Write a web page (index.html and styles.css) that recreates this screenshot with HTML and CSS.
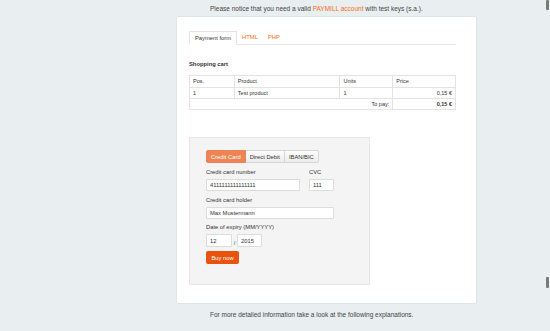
FILE: index.html
```html
<!DOCTYPE html>
<html lang="en">
<head>
    <meta charset="UTF-8">
    <title>PAYMILL - Payment form</title>
    <link rel="stylesheet" href="styles.css">
</head>
<body>
    <div class="page">
        <p class="notice">Please notice that you need a valid <a href="#">PAYMILL account</a> with test keys (s.a.).</p>

        <!-- Main card -->
        <div class="card">
            <ul class="tabs">
                <li class="active"><a href="#">Payment form</a></li>
                <li><a href="#">HTML</a></li>
                <li><a href="#">PHP</a></li>
            </ul>

            <h3>Shopping cart</h3>
            <table class="cart">
                <tr>
                    <th class="c-pos">Pos.</th>
                    <th class="c-product">Product</th>
                    <th class="c-units">Units</th>
                    <th class="c-price">Price</th>
                </tr>
                <tr>
                    <td>1</td>
                    <td>Test product</td>
                    <td>1</td>
                    <td class="right">0,15 &euro;</td>
                </tr>
                <tr>
                    <td colspan="3" class="right">To pay:</td>
                    <td class="right"><strong>0,15 &euro;</strong></td>
                </tr>
            </table>

            <!-- Payment box -->
            <div class="payment">
                <div class="btn-group">
                    <button class="active">Credit Card</button>
                    <button>Direct Debit</button>
                    <button>IBAN/BIC</button>
                </div>

                <div class="row">
                    <div class="field number">
                        <label>Credit card number</label>
                        <input type="text" value="4111111111111111">
                    </div>
                    <div class="field cvc">
                        <label>CVC</label>
                        <input type="text" value="111">
                    </div>
                </div>

                <div class="field holder">
                    <label>Credit card holder</label>
                    <input type="text" value="Max Mustermann">
                </div>

                <div class="field">
                    <label>Date of expiry (MM/YYYY)</label>
                    <div class="expiry">
                        <input type="text" class="month" value="12">
                        <span>/</span>
                        <input type="text" class="year" value="2015">
                    </div>
                </div>

                <button class="buy">Buy now</button>
            </div>
        </div>

        <p class="footer-note">For more detailed information take a look at the following explanations.</p>
    </div>

    <div class="scroll-mark top"></div>
    <div class="scroll-mark bottom"></div>
</body>
</html>
```

FILE: styles.css
```css
/* Basic reset */
* {
    margin: 0;
    padding: 0;
    box-sizing: border-box;
}

body {
    font-family: "Liberation Sans", Arial, sans-serif;
    font-size: 5.8px;
    background-color: #e9eef1;
    color: #444;
    height: 331px;
    overflow: hidden;
}

a {
    color: #f26d21;
    text-decoration: none;
}

.page {
    margin-left: 176px;
    width: 301px;
}

.notice {
    height: 16px;
    line-height: 17px;
    padding-left: 34px;
    font-size: 6.5px;
    color: #444;
    white-space: nowrap;
}

/* Card */
.card {
    height: 288px;
    background-color: #fff;
    border: 1px solid #dfe4e7;
    border-radius: 2px;
    padding: 14px 20px 0 12px;
}

.tabs {
    list-style: none;
    display: flex;
    height: 14px;
    border-bottom: 1px solid #e6e6e6;
}

.tabs li {
    height: 14px;
    line-height: 13px;
    padding: 0 5px;
}

.tabs li.active {
    background-color: #fff;
    border: 1px solid #e3e3e3;
    border-bottom-color: #fff;
    padding: 0 5px;
}

.tabs li.active a {
    color: #333;
}

.card h3 {
    font-size: 5.8px;
    font-weight: bold;
    color: #333;
    line-height: 8px;
    margin-top: 15px;
    margin-bottom: 7px;
}

/* Cart table */
.cart {
    width: 267px;
    border-collapse: collapse;
    font-size: 5.5px;
}

.cart th,
.cart td {
    border: 1px solid #e3e3e3;
    padding: 0 3px;
    height: 11px;
    line-height: 9px;
    text-align: left;
    font-weight: normal;
    color: #333;
}

.cart th {
    height: 12px;
}

.cart .right {
    text-align: right;
}

.c-pos { width: 45px; }
.c-product { width: 106px; }
.c-units { width: 53px; }
.c-price { width: 63px; }

/* Payment box */
.payment {
    width: 181px;
    height: 148px;
    margin-top: 27px;
    background-color: #f4f4f4;
    border: 1px solid #e6e6e6;
    padding: 12px 16px;
}

.btn-group {
    display: flex;
}

.btn-group button {
    height: 13px;
    white-space: nowrap;
    font-family: inherit;
    font-size: 5.8px;
    color: #333;
    background: linear-gradient(#fdfdfd, #ececec);
    border: 1px solid #d6d6d6;
    border-left: none;
    padding: 0 4px;
}

.btn-group button:first-child {
    border-left: 1px solid #e9835a;
    border-radius: 2px 0 0 2px;
}

.btn-group button:last-child {
    border-radius: 0 2px 2px 0;
}

.btn-group button.active {
    background: #ef8453;
    border-color: #e9835a;
    color: #fff;
}

.row {
    display: flex;
    gap: 9px;
}

.field label {
    display: block;
    line-height: 8px;
    margin-top: 4px;
    margin-bottom: 3px;
    color: #333;
}

.row .field label {
    margin-top: 5px;
}

.field input {
    height: 12px;
    border: 1px solid #dcdcdc;
    border-radius: 1px;
    background-color: #fff;
    font-family: inherit;
    font-size: 5.8px;
    color: #333;
    padding: 0 3px;
}

.number input { width: 94px; }
.cvc input { width: 25px; }
.holder input { width: 128px; }

.field:nth-of-type(3) label {
    margin-top: 5px;
}

.expiry {
    display: flex;
    align-items: flex-end;
}

.expiry input {
    height: 13px;
}

.expiry .month { width: 26px; }
.expiry .year { width: 25px; }

.expiry span {
    width: 5px;
    text-align: center;
    line-height: 7px;
}

.buy {
    display: block;
    margin-top: 4px;
    width: 33px;
    height: 13px;
    background-color: #e8530e;
    color: #fff;
    border: none;
    border-radius: 2px;
    font-family: inherit;
    font-size: 5.8px;
}

.footer-note {
    margin-top: 7px;
    line-height: 8px;
    padding-left: 34px;
    font-size: 6.5px;
    color: #444;
    white-space: nowrap;
}

/* Scrollbar fragments at the right edge */
.scroll-mark {
    position: absolute;
    right: 1px;
    width: 3px;
    background-color: #7a7a7a;
    border-radius: 1px;
}

.scroll-mark.top {
    top: 0;
    height: 10px;
}

.scroll-mark.bottom {
    top: 277px;
    height: 11px;
}
```
